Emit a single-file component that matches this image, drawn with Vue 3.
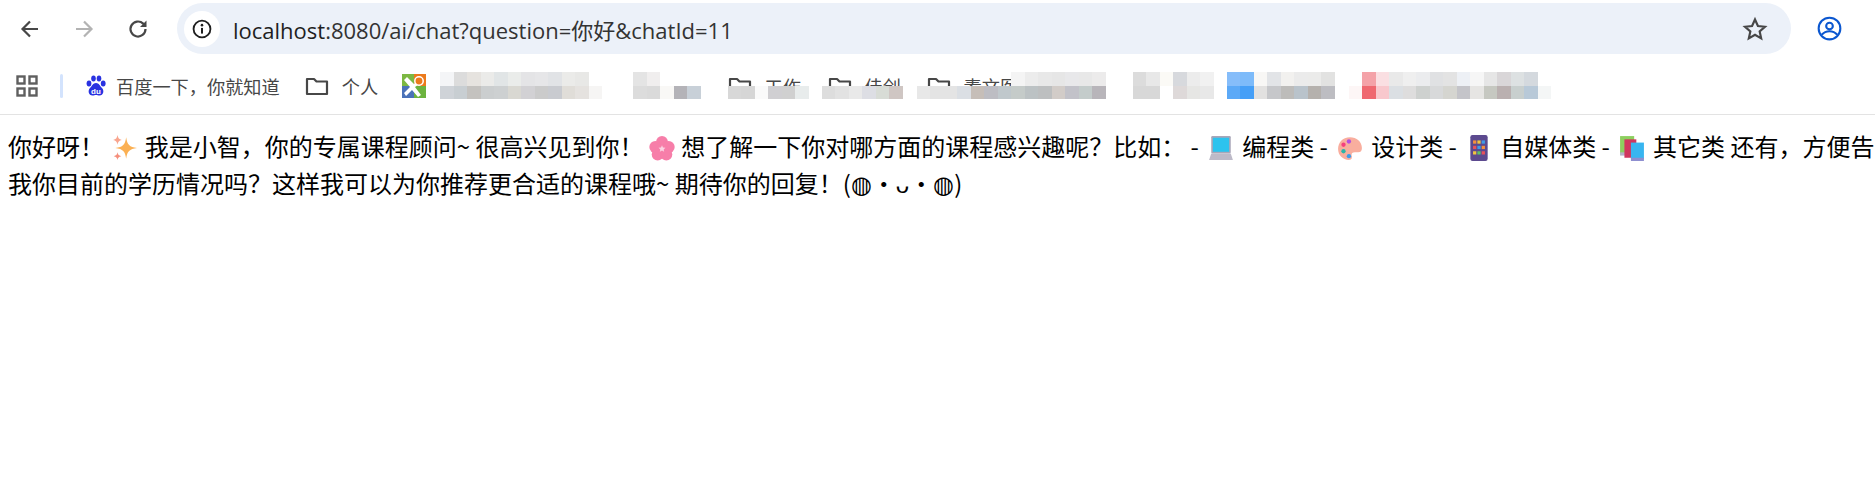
<template>
  <div class="page">
    <!-- barra do navegador -->
    <header class="toolbar">
      <svg class="nav-icon" viewBox="0 0 24 24"><path d="M20 12H5M12 4.5 4.5 12l7.5 7.5" fill="none" stroke="#474747" stroke-width="2.2"/></svg>
      <svg class="nav-icon" viewBox="0 0 24 24"><path d="M4 12h15M12 4.5l7.5 7.5-7.5 7.5" fill="none" stroke="#b3b3b3" stroke-width="2.2"/></svg>
      <svg class="nav-icon" viewBox="0 0 24 24"><path d="M19.5 12a7.5 7.5 0 1 1-2.3-5.4L19.5 9" fill="none" stroke="#474747" stroke-width="2.2"/><path d="M20.5 3.5V10H14z" fill="#474747"/></svg>
      <div class="omnibox">
        <span class="site-info">
          <svg viewBox="0 0 24 24" width="22" height="22"><circle cx="12" cy="12" r="9.2" fill="none" stroke="#1f1f1f" stroke-width="2"/><path d="M12 10.8V17" stroke="#1f1f1f" stroke-width="2.2"/><circle cx="12" cy="7.8" r="1.4" fill="#1f1f1f"/></svg>
        </span>
        <span class="url"><b>localhost</b>:8080/ai/chat?question=你好&amp;chatId=11</span>
        <svg class="star" viewBox="0 0 24 24"><path d="M12 3.2l2.7 6 6.5.7-4.9 4.3 1.4 6.4L12 17.3l-5.7 3.3 1.4-6.4-4.9-4.3 6.5-.7z" fill="none" stroke="#474747" stroke-width="2"/></svg>
      </div>
      <svg class="avatar" viewBox="0 0 24 24"><circle cx="12" cy="12" r="10.4" fill="none" stroke="#0b57d0" stroke-width="2"/><circle cx="12" cy="9.6" r="3.2" fill="none" stroke="#0b57d0" stroke-width="2"/><path d="M4.6 18c2-2.400 4.600-3.400 7.400-3.400s5.400 1 7.400 3.400" fill="none" stroke="#0b57d0" stroke-width="2"/></svg>
    </header>

    <!-- barra de favoritos -->
    <nav class="bookmarks">
      <svg class="apps" viewBox="0 0 22 22"><g fill="none" stroke="#5f5f5f" stroke-width="2.4"><rect x="1.500" y="1.500" width="7" height="7"/><rect x="13.500" y="1.500" width="7" height="7"/><rect x="1.500" y="13.500" width="7" height="7"/><rect x="13.500" y="13.500" width="7" height="7"/></g></svg>
      <span class="sep"></span>
      <svg class="baidu" viewBox="0 0 20 22">
        <g fill="#2932e1"><ellipse cx="3" cy="8.500" rx="2.400" ry="3"/><ellipse cx="7.500" cy="3.500" rx="2.300" ry="3"/><ellipse cx="13" cy="3.500" rx="2.300" ry="3"/><ellipse cx="17.200" cy="8.500" rx="2.400" ry="3"/><path d="M10 8c3 0 4 3 6 5 2.500 2.500 1.500 7.500-2.500 7.500-1.500 0-2.300-.5-3.500-.5s-2 .5-3.500.5C2.500 20.500 1.500 15.500 4 13c2-2 3-5 6-5z"/></g>
        <text x="10" y="18.500" text-anchor="middle" class="du">du</text>
      </svg>
      <span class="label baidu-label">百度一下，你就知道</span>
      <svg class="folder first-folder" viewBox="0 0 24 20"><path d="M2 3h7l2.500 2.500H22V18H2z" fill="none" stroke="#474747" stroke-width="2.200" stroke-linejoin="round"/></svg>
      <span class="label">个人</span>
      <svg class="tool-icon" viewBox="0 0 24 24">
        <rect width="24" height="24" fill="#6cb33f"/><path d="M12 0h12v12H12z" fill="#ec7a1c"/><path d="M0 12h12v12H0z" fill="#4a72b8"/><path d="M0 0h12v12H0z" fill="#7cb842"/>
        <path d="M5 3l7 7 2-2 2 3-3 2 6 8-3 2-6-7-6 6-2-3 6-6-6-7z" fill="#fff"/><circle cx="17" cy="7" r="4.200" fill="#ec7a1c" stroke="#fff" stroke-width="1.500"/>
      </svg>
      <div
        v-for="(item, i) in blurred"
        :key="i"
        class="blurred"
        :style="{ marginLeft: item.gap + 'px', width: item.bottom.length * 13.5 + 'px' }"
      >
        <div v-if="item.label" class="under" :style="{ paddingLeft: item.pad + 'px' }">
          <svg class="folder" viewBox="0 0 24 20"><path d="M2 3h7l2.500 2.500H22V18H2z" fill="none" stroke="#474747" stroke-width="2.200" stroke-linejoin="round"/></svg>
          <span class="label">{{ item.label }}</span>
        </div>
        <div class="mosaic">
          <div class="mosaic-row top">
            <i v-for="(c, j) in item.top" :key="j" :style="{ background: c }"></i>
          </div>
          <div class="mosaic-row">
            <i v-for="(c, j) in item.bottom" :key="j" :style="{ background: c }"></i>
          </div>
        </div>
      </div>
    </nav>

    <!-- resposta -->
    <p class="answer">你好呀！ <svg class="emoji sparkle" viewBox="0 0 24 24"><path d="M14 2c1 7 3 9 10 10-7 1-9 3-10 10-1-7-3-9-10-10 7-1 9-3 10-10z" fill="#fbb053"/><path d="M6 0c.5 3 1.500 4 4 4.500C7.500 5 6.500 6 6 9c-.5-3-1.500-4-4-4.500C4.500 4 5.500 3 6 0z" fill="#f9a58e"/><path d="M6 16c.4 2.300 1.200 3 3.500 3.500-2.300.5-3.100 1.200-3.500 3.500-.4-2.300-1.200-3-3.500-3.500 2.300-.5 3.100-1.200 3.500-3.500z" fill="#f58f7c"/></svg> 我是小智，你的专属课程顾问~ 很高兴见到你！ <svg class="emoji flower" viewBox="0 0 24 24"><g fill="#f77ea9"><circle cx="12" cy="6.500" r="5.500"/><circle cx="5.800" cy="11" r="5.500"/><circle cx="18.200" cy="11" r="5.500"/><circle cx="8" cy="18" r="5.500"/><circle cx="16" cy="18" r="5.500"/></g><path d="M12 9.500l.9 2.100 2.300.2-1.700 1.500.5 2.200-2-1.200-2 1.200.5-2.200-1.700-1.500 2.300-.2z" fill="#fbd3e2"/></svg> 想了解一下你对哪方面的课程感兴趣呢？比如： - <svg class="emoji" viewBox="0 0 24 24"><rect x="3" y="1" width="18" height="16" rx="1" fill="#a9a6b8"/><rect x="4.500" y="2.500" width="15" height="13" fill="#2cc3ee"/><path d="M3 17h18l2 6H1z" fill="#bdbac8"/></svg> 编程类 - <svg class="emoji" viewBox="0 0 24 24"><path d="M12 2C5 2 1 7 1 13s4.500 10 10 10c3 0 3-2 2.500-4-.4-2 .8-3 3-3h3c2.500 0 3.500-1.500 3.500-4C23 6 18 2 12 2z" fill="#f9ae9e"/><circle cx="11" cy="6" r="2" fill="#b44fe0"/><circle cx="6" cy="9" r="2" fill="#f5417d"/><circle cx="6" cy="15" r="2" fill="#2cb5a8"/><circle cx="11" cy="19.500" r="2" fill="#3f9be8"/></svg> 设计类 - <svg class="emoji" viewBox="0 0 24 24"><rect x="4" y="0" width="16" height="24" rx="2" fill="#5c4a8f"/><g fill="#f5913c"><rect x="6.500" y="5" width="3" height="3"/><rect x="14.500" y="10" width="3" height="3"/></g><g fill="#f2c53d"><rect x="10.500" y="5" width="3" height="3"/><rect x="6.500" y="15" width="3" height="3"/></g><g fill="#3f9be8"><rect x="14.500" y="5" width="3" height="3"/><rect x="10.500" y="10" width="3" height="3"/></g><g fill="#e8525a"><rect x="6.500" y="10" width="3" height="3"/><rect x="14.500" y="15" width="3" height="3"/></g><rect x="10.500" y="15" width="3" height="3" fill="#5cc46a"/></svg> 自媒体类 - <svg class="emoji" viewBox="0 0 24 24"><rect x="1" y="1" width="13" height="17" fill="#8dcf5f"/><rect x="1" y="16" width="13" height="3" fill="#b4b3c8"/><rect x="5" y="4" width="11" height="17" fill="#d1365f"/><rect x="11" y="7" width="12" height="15" fill="#38b5f0"/><rect x="11" y="21" width="12" height="3" fill="#8e8fd0"/></svg> 其它类 还有，方便告我你目前的学历情况吗？这样我可以为你推荐更合适的课程哦~ 期待你的回复！(◍•ᴗ•◍)</p>
  </div>
</template>

<script setup>
// blocos borrados da barra de favoritos
const blurred = [
  {
    gap: 14,
    top: ['#f4f5f7', '#dcdcdc', '#e6e3df', '#ebebe9', '#e1e5e6', '#eaecea', '#e4e4e6', '#e6e6e8', '#e1e3e6', '#ebebe9', '#e8e8e6', 'transparent'],
    bottom: ['#cfd3d8', '#c8ced2', '#c4c2bf', '#cbcecf', '#cdd0d1', '#d9d8d2', '#d2d1d4', '#cbcbcb', '#c9cbd0', '#e0ddd8', '#e5e2df', '#f6f5f4']
  },
  {
    gap: 31,
    top: ['#e4e4e4', '#f0eeee'],
    bottom: ['#dcdcdc', '#dadada', '#f9f8f6', '#b4b3b8', '#c8d0d8']
  },
  {
    gap: 27,
    label: '工作',
    pad: 0,
    top: [],
    bottom: ['#d8d8d8', '#d6d6d6', '#fafafa', '#d0cfd2', '#d0d0d0', '#e8ecec']
  },
  {
    gap: 13,
    label: '佳创',
    pad: 6,
    top: [],
    bottom: ['#dddddd', '#e2e2e2', '#e9e9e9', '#dddee4', '#d8dcd6', '#cfc6c3']
  },
  {
    gap: 14,
    label: '素文医',
    pad: 10,
    top: ['transparent', 'transparent', 'transparent', 'transparent', 'transparent', 'transparent', 'transparent', '#f4f4f4', '#ececec', '#e8e8e8', '#e6e6e6', '#e8e8ea', '#e8e8e8', '#ecebeb'],
    bottom: ['#e8e8e8', '#e4e4e4', '#e4e4e4', '#dbdfe4', '#c6beb8', '#bdbdc3', '#c0c8cc', '#c5cbc9', '#bcc2c4', '#bdbfc0', '#d2ccc8', '#c2c2c9', '#c4cccb', '#b8b5ba']
  },
  {
    gap: 27,
    top: ['#dcdcdc', '#e8e8e8', '#fbfaf6', '#d7d9dd', '#ececec', '#f1f1f1'],
    bottom: ['#d8d8d8', '#d8d8d8', '#ffffff', '#ded9d9', '#e6e6e4', '#e8e8e8']
  },
  {
    gap: 13,
    top: ['#86bdfa', '#7dbbfa', '#f8f7f5', '#e2e4e7', '#f2f1ef', '#ebebeb', '#ebebea', '#e2e2e1'],
    bottom: ['#5ca9f7', '#459ff7', '#e2e1e0', '#c6c7ca', '#bdbcba', '#b9c3cb', '#b5b1ad', '#bdbdc2']
  },
  {
    gap: 14,
    top: ['transparent', '#f4a2a8', '#fadfe2', '#e9e9e9', '#efefef', '#ebecee', '#e0e1e3', '#e3e3e3', '#edf0f5', '#f6f6f6', '#e6e6e6', '#d9d6d8', '#dde1e2', '#d4d9de', 'transparent'],
    bottom: ['#fdf6f6', '#ef6870', '#f8c8cd', '#dbdfe3', '#dedddd', '#ced1cf', '#d8d9da', '#d5d5d0', '#c4c4c9', '#e6e5e3', '#c6c8c1', '#bab0b0', '#c8cfce', '#b8c9d8', '#f4f6f6']
  }
]
</script>

<style scoped>
.page {
  width: 1875px;
  height: 495px;
  overflow: hidden;
  background: #fff;
  font-family: "Noto Sans CJK SC", sans-serif;
}

.toolbar {
  display: flex;
  align-items: center;
  height: 57px;
  padding-left: 18px;
  box-sizing: border-box;
}

.nav-icon {
  width: 24px;
  height: 24px;
  margin-right: 30px;
}

.nav-icon:nth-child(3) {
  margin-right: 27px;
}

.omnibox {
  display: flex;
  align-items: center;
  width: 1614px;
  height: 51px;
  padding: 0 7px;
  box-sizing: border-box;
  border-radius: 26px;
  background: #ecf1f9;
}

.site-info {
  display: flex;
  align-items: center;
  justify-content: center;
  width: 36px;
  height: 36px;
  border-radius: 50%;
  background: #fff;
}

.url {
  flex: 1;
  margin-left: 13px;
  font-family: "Open Sans", "Noto Sans CJK SC", sans-serif;
  font-size: 22px;
  color: #333;
}

.url b {
  font-weight: 400;
  color: #1f1f1f;
}

.star {
  width: 26px;
  height: 26px;
  margin-right: 16px;
}

.avatar {
  width: 25px;
  height: 25px;
  margin-left: 26px;
}

.bookmarks {
  display: flex;
  align-items: center;
  height: 58px;
  padding-left: 16px;
  box-sizing: border-box;
  border-bottom: 1px solid #e3e3e3;
}

.apps {
  width: 22px;
  height: 22px;
}

.sep {
  width: 3px;
  height: 24px;
  margin: 0 23px 0 22px;
  background: #d3e3fd;
  border-radius: 2px;
}

.baidu {
  width: 20px;
  height: 22px;
}

.du {
  font: 700 8px "Liberation Sans", sans-serif;
  fill: #fff;
}

.label {
  font-size: 18.2px;
  color: #474747;
  white-space: nowrap;
}

.baidu-label {
  margin-left: 10px;
}

.folder {
  flex: none;
  width: 24px;
  height: 20px;
  margin-right: 13px;
}

.first-folder {
  margin-left: 25px;
}

.tool-icon {
  flex: none;
  width: 24px;
  height: 24px;
  margin-left: 24px;
}

.blurred {
  position: relative;
  flex: none;
  height: 27px;
}

.under {
  display: flex;
  align-items: center;
  height: 27px;
  overflow: hidden;
}

.mosaic {
  position: absolute;
  inset: 0;
  display: flex;
  flex-direction: column;
}

.mosaic-row {
  display: flex;
  height: 13px;
}

.mosaic-row.top {
  height: 14px;
}

.mosaic-row i {
  width: 13.5px;
  height: 100%;
}

.answer {
  width: 1880px;
  margin: 12px 0 0;
  padding-left: 8px;
  font-size: 24px;
  line-height: 37px;
  color: #000;
}

.emoji {
  width: 26px;
  height: 26px;
  margin: 0 3px 0 3.5px;
  vertical-align: -5px;
}

.emoji.sparkle {
  margin: 0 2px;
}

.emoji.flower {
  margin: 0 1px 0 0;
}
</style>
